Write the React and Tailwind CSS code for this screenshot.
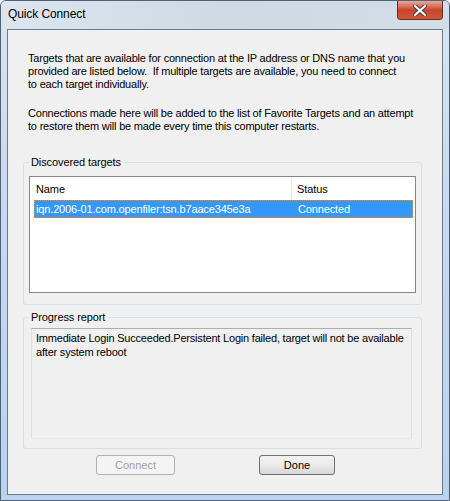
import React from "react";

export default function App() {
  const ui = { fontFamily: '"Liberation Sans", Arial, sans-serif' };
  return (
    <div className="w-[450px] h-[501px] bg-[#f0f0f0]" style={ui}>
      <div className="w-[450px] h-[501px] flex flex-col rounded-t-[6px] border border-[#4e6178] bg-gradient-to-b from-[#d9e4ef] via-[#c4d8ee] to-[#b9d2ee] overflow-hidden">
        {/* title bar */}
        <div className="h-[28px] flex items-start justify-between shrink-0 bg-gradient-to-r from-[#dde6ef] via-[#cfd9e4] to-[#d3dde8]">
          <div className="pl-[7px] pt-[5px] text-[12px] tracking-[-0.1px] text-black leading-[16px]">Quick Connect</div>
          <div className="mr-[6px] w-[46px] h-[19px] rounded-b-[4px] border border-t-0 border-[#6b2a20] bg-gradient-to-b from-[#e9a99a] via-[#c7442c] to-[#d2563a] flex items-center justify-center">
            <svg width="14" height="11" viewBox="0 0 14 11">
              <path d="M2 1 L12 10 M12 1 L2 10" stroke="#3b3b3b" strokeWidth="4" strokeLinecap="square" />
              <path d="M2 1 L12 10 M12 1 L2 10" stroke="#ffffff" strokeWidth="2.2" strokeLinecap="square" />
            </svg>
          </div>
        </div>
        {/* client */}
        <div className="ml-[6px] mr-[6px] mb-[5px] flex-1 border border-[#6a7c91] bg-[#f0f0f0] flex flex-col">
          <div className="pl-[20px] pt-[22px] text-[11px] tracking-[-0.2px] leading-[13px] text-black">
            <p className="pr-[37px]">Targets that are available for connection at the IP address or DNS name that you provided are listed below.&nbsp; If multiple targets are available, you need to connect to each target individually.</p>
            <p className="mt-[16px] pr-[24px]">Connections made here will be added to the list of Favorite Targets and an attempt to restore them will be made every time this computer restarts.</p>
          </div>
          {/* discovered targets group */}
          <div className="relative mt-[29px] ml-[15px] w-[399px] h-[143px] border border-[#d5dfe5] rounded-[3px] px-[5px] pt-[13px]">
            <div className="absolute -top-[8px] left-[4px] px-[3px] bg-[#f0f0f0] text-[11px] tracking-[-0.1px] leading-[14px]">Discovered targets</div>
            <div className="h-[117px] border border-[#828790] bg-white flex flex-col">
              <div className="h-[23px] flex text-[11px] tracking-[-0.1px] leading-[23px] pt-[1px]">
                <div className="w-[262px] pl-[6px] border-r border-[#e3e6ea]">Name</div>
                <div className="pl-[5px]">Status</div>
              </div>
              <div className="ml-[4px] mr-[2px] h-[18px] bg-[#3399ff] text-white border border-dotted border-[#d88e4e] flex text-[11px] tracking-[-0.15px] leading-[16px]">
                <div className="w-[257px] pl-[1px]">iqn.2006-01.com.openfiler:tsn.b7aace345e3a</div>
                <div className="pl-[6px]">Connected</div>
              </div>
            </div>
          </div>
          {/* progress report group */}
          <div className="relative mt-[12px] ml-[15px] w-[399px] h-[132px] border border-[#d5dfe5] rounded-[3px] pl-[7px] pr-[9px] pt-[10px]">
            <div className="absolute -top-[8px] left-[4px] px-[3px] bg-[#f0f0f0] text-[11px] tracking-[-0.1px] leading-[14px]">Progress report</div>
            <div className="h-[111px] border border-t-[#abadb3] border-l-[#dbdfe6] border-r-[#dbdfe6] border-b-[#e3e9ef] pl-[4px] pr-0 pt-[2px] text-[11px] tracking-[-0.2px] leading-[14px]">
              Immediate Login Succeeded.Persistent Login failed, target will not be available after system reboot
            </div>
          </div>
          {/* buttons */}
          <div className="mt-[6px] flex">
            <div className="ml-[88px] w-[79px] h-[20px] border border-[#adb2b5] rounded-[3px] bg-[#f4f4f4] text-[#a0a0a0] text-[11px] flex items-center justify-center">Connect</div>
            <div className="ml-[84px] w-[76px] h-[20px] border border-[#707070] rounded-[3px] bg-gradient-to-b from-[#f2f2f2] via-[#ebebeb] to-[#d6d6d6] text-black text-[11px] flex items-center justify-center">Done</div>
          </div>
        </div>
      </div>
    </div>
  );
}
